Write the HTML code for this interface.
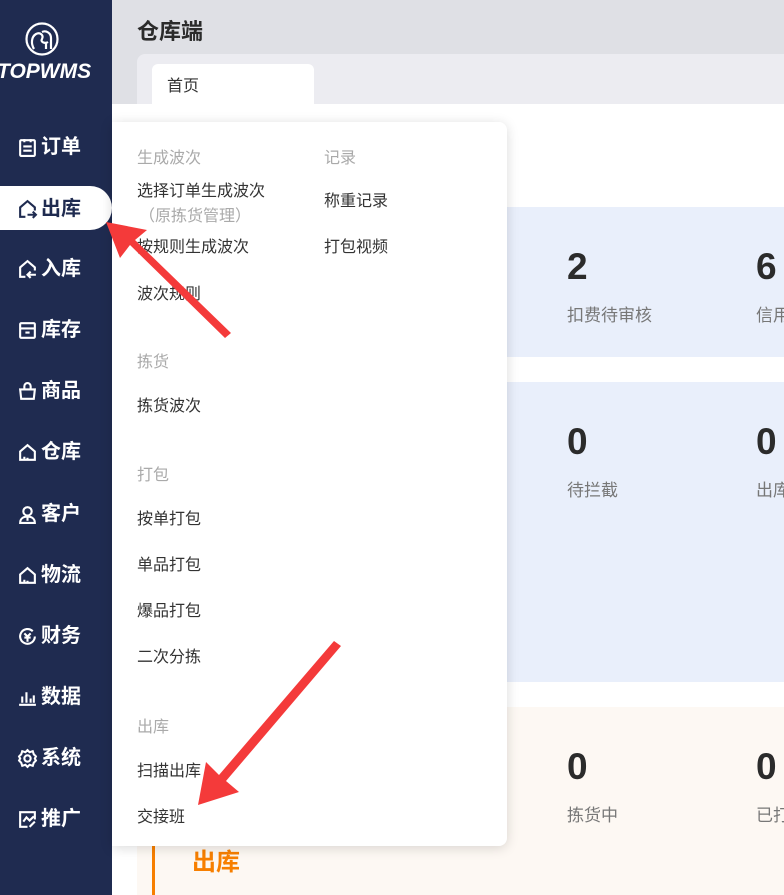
<!DOCTYPE html><html><head><meta charset="utf-8"><style>
*{margin:0;padding:0;box-sizing:border-box}
body{width:784px;height:895px;overflow:hidden;position:relative;background:#fff;font-family:"Liberation Sans","Noto Sans CJK SC",sans-serif}
.a{position:absolute;white-space:nowrap}
#side{left:0;top:0;width:112px;height:895px;background:#1f2b50}
.it{position:absolute;left:17px;color:#fff;font-size:20px;font-weight:bold;height:24px;line-height:24px;display:flex;align-items:center;gap:3px;white-space:nowrap}
.it svg{width:21px;height:21px;fill:none;stroke:#fff;stroke-width:2}
.act{left:0;top:186px;width:112px;height:44px;background:#fff;border-radius:0 22px 22px 0}
.m{position:absolute;font-size:16px;color:#333;white-space:nowrap}
.g{position:absolute;font-size:16px;color:#aaa;white-space:nowrap}
.n{position:absolute;font-size:37px;font-weight:bold;color:#2b2b2b;font-family:"Liberation Sans",sans-serif}
.l{position:absolute;font-size:17px;color:#777;white-space:nowrap}
</style></head><body>
<div class="a" style="left:112px;top:0;width:672px;height:104px;background:#dfe0e5"></div>
<div class="a" style="left:137px;top:14px;font-size:22px;font-weight:bold;color:#2b2b2b">仓库端</div>
<div class="a" style="left:137px;top:54px;width:647px;height:50px;background:#ececf1;border-radius:8px 0 0 0"></div>
<div class="a" style="left:152px;top:64px;width:162px;height:40px;background:#fff;border-radius:6px 6px 0 0"></div>
<div class="a" style="left:167px;top:72px;font-size:16px;color:#333">首页</div>
<div class="a" style="left:137px;top:207px;width:647px;height:150px;background:#e9effb"></div>
<div class="a" style="left:137px;top:382px;width:647px;height:300px;background:#e9effb"></div>
<div class="a" style="left:137px;top:707px;width:647px;height:188px;background:#fdf8f3"></div>
<div class="a" style="left:152px;top:820px;width:3px;height:75px;background:#f77f00"></div>
<div class="a" style="left:192px;top:842px;font-size:24px;font-weight:bold;color:#f77f00">出库</div>
<div class="n" style="left:567px;top:246px">2</div><div class="l" style="left:567px;top:301px">扣费待审核</div>
<div class="n" style="left:756px;top:246px">6</div><div class="l" style="left:756px;top:301px">信用</div>
<div class="n" style="left:567px;top:421px">0</div><div class="l" style="left:567px;top:476px">待拦截</div>
<div class="n" style="left:756px;top:421px">0</div><div class="l" style="left:756px;top:476px">出库</div>
<div class="n" style="left:567px;top:746px">0</div><div class="l" style="left:567px;top:801px">拣货中</div>
<div class="n" style="left:756px;top:746px">0</div><div class="l" style="left:756px;top:801px">已打</div>

<div class="a" id="side"></div>
<svg class="a" style="left:22px;top:22px" width="40" height="34" viewBox="0 0 40 34" fill="none" stroke="#fff" stroke-width="2.2"><circle cx="20" cy="17" r="15.5"/><path d="M12 27c-3-5-3-12 2-15 4-2 8 1 6 5-2 3 3 5 6 3M20 10c4-2 9 1 9 6v11M24 27v-6"/></svg>
<div class="a" style="left:-3px;top:60px;color:#fff;font-size:21px;font-weight:bold;font-style:italic">TOPWMS</div>
<div class="a act"></div>
<div class="it" style="top:135px"><svg viewBox="0 0 20 20"><rect x="3" y="3" width="14" height="15" rx="1"/><path d="M7 2v3M13 2v3M6 9h8M6 13h8"/></svg>订单</div>
<div class="it" style="top:197px;color:#1f2b50"><svg viewBox="0 0 20 20" style="stroke:#1f2b50"><path d="M8 17H3V8l7-6 7 6v3M10 15h8M15 12l3 3-3 3"/></svg>出库</div>
<div class="it" style="top:257px"><svg viewBox="0 0 20 20"><path d="M8 17H3V8l7-6 7 6v3M18 15h-8M13 12l-3 3 3 3"/></svg>入库</div>
<div class="it" style="top:318px"><svg viewBox="0 0 20 20"><rect x="3" y="3" width="14" height="14" rx="1"/><path d="M3 8h14M8 12h4"/></svg>库存</div>
<div class="it" style="top:379px"><svg viewBox="0 0 20 20"><path d="M3 8h14l-1 9H4zM7 8V5a3 3 0 016 0v3"/></svg>商品</div>
<div class="it" style="top:440px"><svg viewBox="0 0 20 20"><path d="M3 17V9l7-6 7 6v8zM7 14v3M9 16h2"/></svg>仓库</div>
<div class="it" style="top:502px"><svg viewBox="0 0 20 20"><circle cx="10" cy="7" r="4"/><path d="M3 18c0-4 3-6 7-6s7 2 7 6zM10 13v3"/></svg>客户</div>
<div class="it" style="top:563px"><svg viewBox="0 0 20 20"><path d="M3 17V9l7-6 7 6v8zM7 14v3M9 16h2"/></svg>物流</div>
<div class="it" style="top:624px"><svg viewBox="0 0 20 20"><path d="M17 10a7 7 0 11-2-5M7 7l3 3 3-3M10 10v5M7 11h6"/></svg>财务</div>
<div class="it" style="top:685px"><svg viewBox="0 0 20 20"><path d="M2 17h16M5 15V9M9 15V5M13 15v-4M16 15V8"/></svg>数据</div>
<div class="it" style="top:746px"><svg viewBox="0 0 20 20"><circle cx="10" cy="10" r="3"/><path d="M10 2l2 2 3-1 1 3 2 2-1 2 1 2-2 2-1 3-3-1-2 2-2-2-3 1-1-3-2-2 1-2-1-2 2-2 1-3 3 1z"/></svg>系统</div>
<div class="it" style="top:807px"><svg viewBox="0 0 20 20"><path d="M10 17H3V3h14v7M6 12l3-4 3 3 4-4M12 17l5-5"/></svg>推广</div>

<div class="a" style="left:112px;top:122px;width:395px;height:724px;background:#fff;border-radius:0 8px 8px 0;box-shadow:0 2px 12px rgba(0,0,0,.15)"></div>
<div class="g" style="left:137px;top:144px">生成波次</div>
<div class="m" style="left:137px;top:177px">选择订单生成波次</div>
<div class="g" style="left:139px;top:202px">（原拣货管理）</div>
<div class="m" style="left:137px;top:233px">按规则生成波次</div>
<div class="m" style="left:137px;top:280px">波次规则</div>
<div class="g" style="left:137px;top:348px">拣货</div>
<div class="m" style="left:137px;top:392px">拣货波次</div>
<div class="g" style="left:137px;top:461px">打包</div>
<div class="m" style="left:137px;top:505px">按单打包</div>
<div class="m" style="left:137px;top:551px">单品打包</div>
<div class="m" style="left:137px;top:597px">爆品打包</div>
<div class="m" style="left:137px;top:643px">二次分拣</div>
<div class="g" style="left:137px;top:713px">出库</div>
<div class="m" style="left:137px;top:757px">扫描出库</div>
<div class="m" style="left:137px;top:803px">交接班</div>
<div class="g" style="left:324px;top:144px">记录</div>
<div class="m" style="left:324px;top:187px">称重记录</div>
<div class="m" style="left:324px;top:233px">打包视频</div>

<svg class="a" style="left:0;top:0" width="784" height="895"><g fill="#f43a3a">
<polygon points="106,222 147,230 135,240 231,333 225,338 130,245 120,258"/>
<polygon points="198,805 206,762 219,775 334,641 341,646 226,781 239,792"/>
</g></svg>
</body></html>
